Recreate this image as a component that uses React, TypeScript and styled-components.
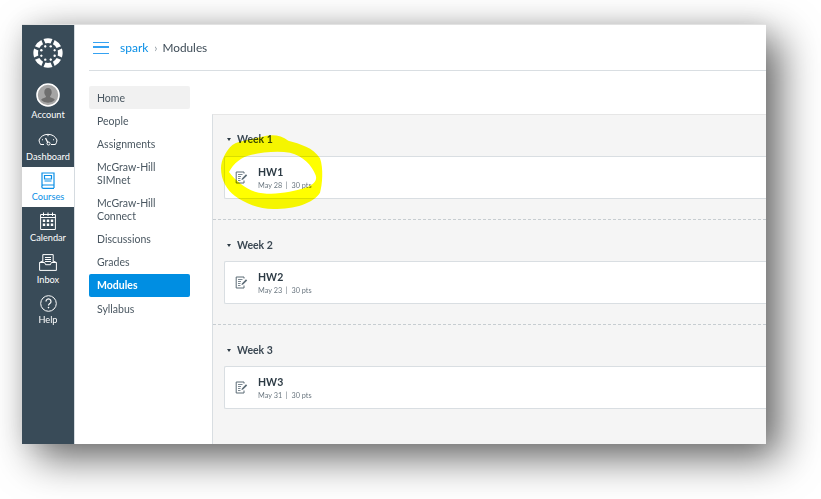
import styled, { createGlobalStyle } from "styled-components";

const GlobalStyle = createGlobalStyle`
  html, body {
    margin: 0;
    background: #fff;
    font-family: Lato, "Open Sans", sans-serif;
  }
`;

const Page = styled.div`
  width: 821px;
  height: 499px;
  padding: 24px 0 0 22px;
  box-sizing: border-box;
  overflow: hidden;
`;

const Frame = styled.div`
  position: relative;
  width: 744px;
  height: 420px;
  background: #fff;
  border-top: 1px solid #e2e2e2;
  box-sizing: border-box;
  box-shadow: 14px 14px 38px rgba(0, 0, 0, 0.6), 0 0 22px rgba(0, 0, 0, 0.07);
`;

const Screen = styled.div`
  display: flex;
  height: 100%;
  overflow: hidden;
  filter: blur(0.4px);
`;

const Sidebar = styled.nav`
  flex: 0 0 52px;
  background: #394b58;
  border-right: 1px solid #d5dbe0;
  display: flex;
  flex-direction: column;
  align-items: stretch;
  padding-top: 13px;
`;

const Logo = styled.div`
  display: flex;
  justify-content: center;
  height: 31px;
  margin-bottom: 13px;
`;

const SideItem = styled.a<{ $active?: boolean; $height: number; $top: number }>`
  display: flex;
  flex-direction: column;
  align-items: center;
  height: ${(p) => p.$height}px;
  box-sizing: border-box;
  padding-top: ${(p) => p.$top}px;
  background: ${(p) => (p.$active ? "#fff" : "transparent")};
  color: ${(p) => (p.$active ? "#0a8fe6" : "#fff")};
  font-size: 9.2px;
  line-height: 12px;
`;

const SideLabel = styled.span<{ $gap: number }>`
  margin-top: ${(p) => p.$gap}px;
`;

const Main = styled.div`
  flex: 1;
  min-width: 0;
  display: flex;
  flex-direction: column;
`;

const Header = styled.header`
  height: 45px;
  margin-left: 14px;
  border-bottom: 1px solid #d9dee2;
  display: flex;
  align-items: center;
  padding-left: 4px;
  font-size: 11.8px;
  color: #3e4c57;
`;

const Burger = styled.span`
  width: 16px;
  height: 12px;
  margin-right: 11px;
  border-top: 1.5px solid #35a2f2;
  border-bottom: 1.5px solid #35a2f2;
  box-sizing: border-box;
  position: relative;
  &::after {
    content: "";
    position: absolute;
    left: 0;
    right: 0;
    top: 3.75px;
    height: 1.5px;
    background: #35a2f2;
  }
`;

const Crumb = styled.span`
  color: #0a8fe6;
  font-size: 12px;
`;

const Sep = styled.span`
  margin: 0 5px 0 6px;
  color: #8b969e;
  font-size: 11px;
`;

const Body = styled.div`
  flex: 1;
  display: flex;
  min-height: 0;
  padding-left: 14px;
`;

const CourseNav = styled.ul`
  list-style: none;
  margin: 16px 22px 0 0;
  padding: 0;
  width: 101px;
  flex: none;
  font-size: 10.5px;
  line-height: 13px;
  color: #4a5761;
`;

const NavItem = styled.li<{ $state?: "hover" | "active" }>`
  padding: 5px 8px;
  border-radius: 2px;
  background: ${(p) =>
    p.$state === "hover" ? "#f1f1f1" : p.$state === "active" ? "#008ee2" : "transparent"};
  color: ${(p) => (p.$state === "active" ? "#fff" : "inherit")};
  font-weight: ${(p) => (p.$state === "active" ? 700 : 400)};
  &:first-child {
    margin: -1px 0 1px;
    padding: 6px 8px 4px;
  }
  &:last-child {
    padding-top: 6px;
  }
`;

const Panel = styled.section`
  flex: 1;
  min-width: 0;
  margin-top: 43px;
  background: #f5f5f5;
  border-top: 1px solid #e6e6e6;
  border-left: 1px solid #d9dee2;
`;

const Week = styled.div`
  padding: 18px 0 20px 11px;
  border-bottom: 1px dashed #c7cdd1;
  &:first-child {
    padding-top: 17px;
  }
  &:last-child {
    border-bottom: 0;
  }
`;

const WeekTitle = styled.h3`
  margin: 0 0 9px;
  display: flex;
  align-items: center;
  height: 14px;
  font-size: 10.5px;
  font-weight: 700;
  color: #3a4752;
  ${Week}:first-child & {
    margin-bottom: 10px;
  }
`;

const Caret = styled.span`
  width: 0;
  height: 0;
  margin: 0 6px 0 3px;
  border-left: 2.5px solid transparent;
  border-right: 2.5px solid transparent;
  border-top: 3.5px solid #2d3b45;
`;

const Card = styled.div`
  height: 43px;
  box-sizing: border-box;
  background: #fff;
  border: 1px solid #d9dee2;
  border-right: 0;
  border-radius: 2px 0 0 2px;
  display: flex;
  align-items: center;
  padding-left: 10px;
`;

const CardText = styled.div`
  margin-left: 10px;
`;

const CardTitle = styled.div`
  font-size: 10.5px;
  line-height: 15px;
  font-weight: 700;
  color: #2d3b45;
`;

const CardMeta = styled.div`
  font-size: 7.3px;
  line-height: 11px;
  color: #6b7780;
`;

const Highlight = styled.svg`
  position: absolute;
  left: 183px;
  top: 85px;
  width: 200px;
  height: 120px;
  mix-blend-mode: multiply;
`;

const Edit = () => (
  <svg width="13" height="13" viewBox="0 0 13 13" fill="none" stroke="#5b6a75" strokeWidth="1">
    <path d="M9 2.5V1H1.2v11H9V9.5" />
    <path d="M3 3.5h4.5M3 5.5h3M3 7.5h2.5M3 9.5h2.5" strokeWidth=".8" />
    <path d="M6.5 9l.4-1.6L11 3.3l1.2 1.2L8.1 8.6z" fill="#5b6a75" stroke="none" />
  </svg>
);

const CanvasLogo = () => (
  <svg width="30" height="30" viewBox="-15 -15 30 30" fill="#fff">
    {[0, 45, 90, 135, 180, 225, 270, 315].map((a) => (
      <g key={a} transform={`rotate(${a})`}>
        <path d="M-4.5-13.9A14.6 14.6 0 0 1 4.5-13.9L2.6-9.6A10 10 0 0 0-2.6-9.6z" />
        <circle cx="2.75" cy="-6.65" r="1.2" />
      </g>
    ))}
  </svg>
);

const Avatar = () => (
  <svg width="24" height="24" viewBox="0 0 24 24">
    <circle cx="12" cy="12" r="11" fill="#a5a5a5" stroke="#fff" strokeWidth="1.6" />
    <path
      d="M12 5c2.4 0 3.7 1.9 3.7 4.2 0 1.7-.8 3.2-1.7 4 .1 1 .9 1.4 2.6 2 1.2.4 2 1 2.3 1.8a9.8 9.8 0 0 1-13.8 0c.3-.8 1.1-1.4 2.3-1.8 1.7-.6 2.5-1 2.6-2-.9-.8-1.7-2.3-1.7-4C8.3 6.9 9.6 5 12 5z"
      fill="#6f6f6f"
    />
  </svg>
);

const Gauge = () => (
  <svg width="20" height="14" viewBox="0 0 20 14" fill="none" stroke="#fff" strokeWidth="1">
    <path d="M6 12.5H2.6A8.6 8.6 0 0 1 1 8a10 10 0 0 1 18 0 8.6 8.6 0 0 1-1.6 4.5H13" />
    <path d="M7.5 6l2.5 5" strokeWidth="1.3" />
    <circle cx="10.5" cy="11.5" r="1.5" />
    <path d="M4 7.5l1 .5M10 3v1.2M16 7.5l-1 .5" />
  </svg>
);

const Book = () => (
  <svg width="14" height="17" viewBox="0 0 14 17" fill="none" stroke="#0a8fe6" strokeWidth="1.2">
    <path d="M13 13H2.5a1.7 1.7 0 0 0 0 3.4H13M1 14.6V1h12v15" />
    <path d="M3.5 3.5h7v3.5h-7zM3.5 9h7" />
  </svg>
);

const Calendar = () => (
  <svg width="16" height="18" viewBox="0 0 16 18" fill="none" stroke="#fff" strokeWidth="1">
    <path d="M.6 2.5h14.8v15H.6zM.6 5.5h14.8M3.5.5v3.5M8 .5v3.5M12.5.5v3.5" />
    <path
      d="M2.8 7.5h2.4v2.4H2.8zM6.8 7.5h2.4v2.4H6.8zM10.8 7.5h2.4v2.4h-2.4zM2.8 11.5h2.4v2.4H2.8zM6.8 11.5h2.4v2.4H6.8zM10.8 11.5h2.4v2.4h-2.4z"
      fill="#fff"
      stroke="none"
    />
  </svg>
);

const Inbox = () => (
  <svg width="18" height="17" viewBox="0 0 18 17" fill="none" stroke="#fff" strokeWidth="1">
    <path d="M3.8 9V.6h10.4V9M.6 8.5v7.9h16.8V8.5l-3.2-1.5M3.8 7L.6 8.5h5l1 2.2h4.8l1-2.2h5" />
    <path d="M6 3.5h6M6 5.5h6M6 7.5h6" />
  </svg>
);

const Help = () => (
  <svg width="17" height="17" viewBox="0 0 17 17" fill="none" stroke="#fff" strokeWidth="1">
    <circle cx="8.5" cy="8.5" r="7.8" />
    <path d="M6 6.5a2.5 2.5 0 1 1 3.8 2.1c-.9.6-1.3 1-1.3 2" strokeWidth="1.2" />
    <circle cx="8.5" cy="12.6" r=".8" fill="#fff" stroke="none" />
  </svg>
);

const weeks = [
  { title: "Week 1", name: "HW1", due: "May 28" },
  { title: "Week 2", name: "HW2", due: "May 23" },
  { title: "Week 3", name: "HW3", due: "May 31" },
];

export default function App() {
  return (
    <Page>
      <GlobalStyle />
      <Frame>
        <Screen>
          <Sidebar>
            <Logo>
              <CanvasLogo />
            </Logo>
            <SideItem $height={49} $top={1}>
              <Avatar />
              <SideLabel $gap={2}>Account</SideLabel>
            </SideItem>
            <SideItem $height={36} $top={1}>
              <Gauge />
              <SideLabel $gap={5}>Dashboard</SideLabel>
            </SideItem>
            <SideItem $height={40} $active $top={5}>
              <Book />
              <SideLabel $gap={2}>Courses</SideLabel>
            </SideItem>
            <SideItem $height={42} $top={5}>
              <Calendar />
              <SideLabel $gap={2}>Calendar</SideLabel>
            </SideItem>
            <SideItem $height={42} $top={5}>
              <Inbox />
              <SideLabel $gap={3}>Inbox</SideLabel>
            </SideItem>
            <SideItem $height={41} $top={4}>
              <Help />
              <SideLabel $gap={2}>Help</SideLabel>
            </SideItem>
          </Sidebar>
          <Main>
            <Header>
              <Burger />
              <Crumb>spark</Crumb>
              <Sep>›</Sep>
              <span>Modules</span>
            </Header>
            <Body>
              <CourseNav>
                <NavItem $state="hover">Home</NavItem>
                <NavItem>People</NavItem>
                <NavItem>Assignments</NavItem>
                <NavItem>
                  McGraw-Hill
                  <br />
                  SIMnet
                </NavItem>
                <NavItem>
                  McGraw-Hill
                  <br />
                  Connect
                </NavItem>
                <NavItem>Discussions</NavItem>
                <NavItem>Grades</NavItem>
                <NavItem $state="active">Modules</NavItem>
                <NavItem>Syllabus</NavItem>
              </CourseNav>
              <Panel>
                {weeks.map((w) => (
                  <Week key={w.title}>
                    <WeekTitle>
                      <Caret />
                      {w.title}
                    </WeekTitle>
                    <Card>
                      <Edit />
                      <CardText>
                        <CardTitle>{w.name}</CardTitle>
                        <CardMeta>{w.due} &nbsp;|&nbsp; 30 pts</CardMeta>
                      </CardText>
                    </Card>
                  </Week>
                ))}
              </Panel>
            </Body>
          </Main>
        </Screen>
        <Highlight viewBox="0 0 600 360">
          <path
            fillRule="evenodd"
            fill="#ffff00"
            d="M48 175C48 150 62 128 75 112C92 92 130 92 165 82C195 72 225 72 250 92C285 102 325 112 345 145C356 175 352 225 345 248C325 280 270 297 205 297C160 297 120 280 90 258C65 240 48 210 48 175Z
               M72 186C90 210 118 235 150 245C195 258 260 248 305 232C325 224 338 212 332 196C320 165 295 138 255 128C220 122 175 126 140 134C110 140 85 160 72 186Z"
          />
        </Highlight>
      </Frame>
    </Page>
  );
}
